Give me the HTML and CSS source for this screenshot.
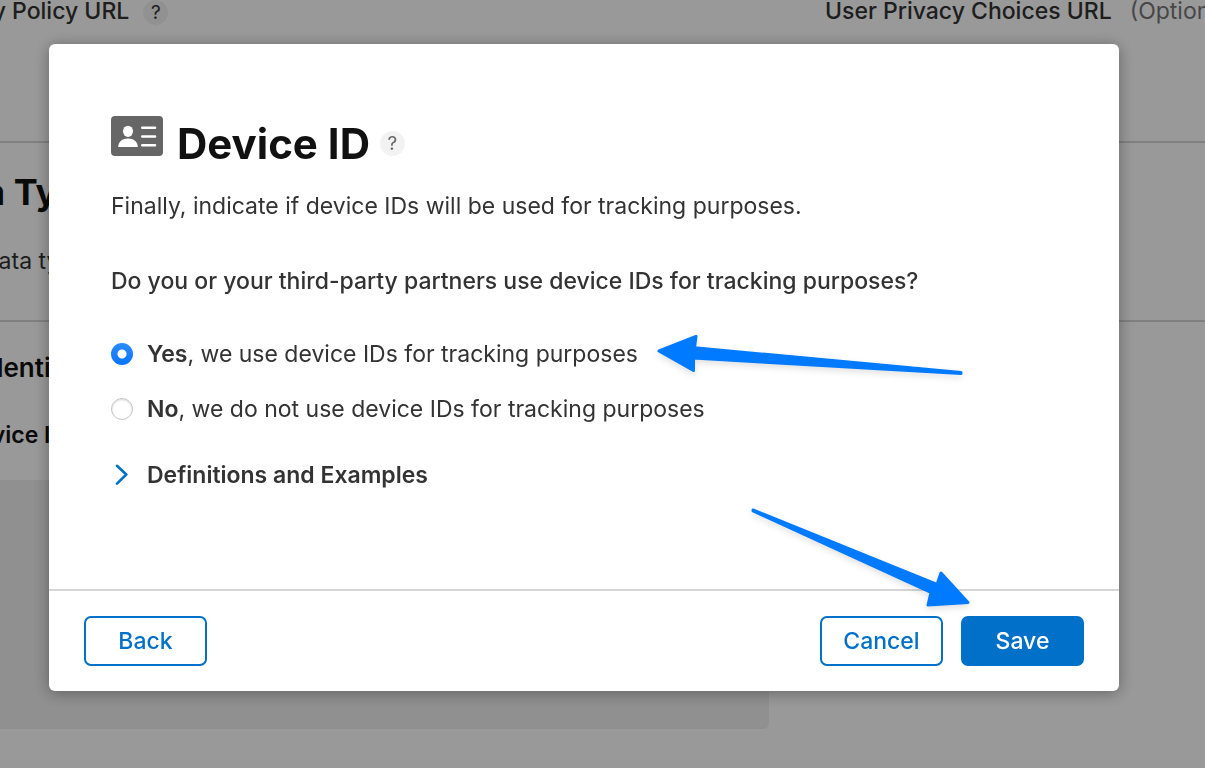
FILE: index.html
```
<!DOCTYPE html>
<html lang="en">
<head>
    <meta charset="UTF-8">
    <meta name="viewport" content="width=device-width, initial-scale=1.0">
    <title>Device ID</title>
    <link rel="stylesheet" href="styles.css">
</head>
<body>
    <main class="page">
        <section class="urls">
            <div class="url">Privacy Policy URL <span class="help page-help">?</span></div>
            <div class="url">User Privacy Choices URL <span class="optional">(Optional)</span></div>
        </section>
        <section class="types">
            <h1>Data Types</h1>
            <p>Data types</p>
        </section>
        <section class="identifiers">
            <h2>Identifiers</h2>
            <h3>Device ID</h3>
            <div class="panel"></div>
        </section>
    </main>

    <div class="overlay">
        <form class="modal" role="dialog" aria-labelledby="title">
            <div class="modal-body">
                <header class="modal-header">
                    <svg class="id-icon" viewBox="0 0 52 40" aria-hidden="true">
                        <rect width="52" height="40" rx="4" fill="#666"/>
                        <ellipse cx="17" cy="15.3" rx="5" ry="5.6" fill="#fff"/>
                        <path d="M7.2 31c0-5.200 4.300-8.500 9.800-8.500s9.800 3.300 9.800 8.500z" fill="#fff"/>
                        <path d="M31.300 11.800h12.700M31.300 20.500h12.700M31.300 29.200h12.700" stroke="#fff" stroke-width="2.600" stroke-linecap="round"/>
                    </svg>
                    <h2 id="title">Device ID</h2>
                    <button type="button" class="help" aria-label="Help">?</button>
                </header>
                <p class="intro">Finally, indicate if device IDs will be used for tracking purposes.</p>
                <fieldset class="options">
                    <legend>Do you or your third-party partners use device IDs for tracking purposes?</legend>
                    <label class="option">
                        <input type="radio" name="tracking" value="yes" checked>
                        <span><b>Yes</b>, we use device IDs for tracking purposes</span>
                    </label>
                    <label class="option">
                        <input type="radio" name="tracking" value="no">
                        <span><b>No</b>, we do not use device IDs for tracking purposes</span>
                    </label>
                </fieldset>
                <button type="button" class="disclosure">
                    <svg viewBox="0 0 22 22" aria-hidden="true">
                        <path d="M6 1.800l9.300 8.700-9.300 9.200" fill="none" stroke="#0070c9" stroke-width="2.600" stroke-linecap="round" stroke-linejoin="round"/>
                    </svg>
                    Definitions and Examples
                </button>
            </div>
            <footer class="modal-footer">
                <button type="button" class="button back">Back</button>
                <button type="button" class="button">Cancel</button>
                <button type="submit" class="button primary">Save</button>
            </footer>

            <!-- Pointers to the selected option and to Save -->
            <svg class="arrow arrow-option" viewBox="0 0 310 44" aria-hidden="true">
                <path d="M4 18L41 3.500 39.500 14.800 306 39.500 306 40.500 38.500 25 38.500 37.500z"/>
            </svg>
            <svg class="arrow arrow-save" viewBox="0 0 224 104" aria-hidden="true">
                <path d="M4 4L4 5 182 86.500 179 99 219 96.500 192 67 188 78.500z"/>
            </svg>
        </form>
    </div>
</body>
</html>
```
FILE: styles.css
```
* {
    box-sizing: border-box;
}

body {
    margin: 0;
    height: 100vh;
    overflow: hidden;
    background: #fff;
    color: #333;
    font-family: Inter, "Liberation Sans", sans-serif;
    font-size: 23px;
    line-height: 30px;
}

h1, h2, h3, p {
    margin: 0;
}

button, input {
    font: inherit;
}

/* Page behind the dialog, scrolled sideways */
.page {
    margin-left: -76px;
}

.urls {
    display: grid;
    grid-template-columns: 901px 1fr;
    height: 147px;
    margin-top: -4px;
    border-bottom: 2px solid #d6d6d6;
    white-space: nowrap;
    font-weight: 500;
}

.optional {
    margin-left: 12px;
    color: #777;
    font-weight: 400;
}

.types {
    height: 179px;
    padding-top: 25px;
    border-bottom: 2px solid #d6d6d6;
}

.types h1 {
    color: #111;
    font-size: 36px;
    line-height: 48px;
}

.types p {
    margin-top: 30px;
    padding-left: 58px;
}

.identifiers {
    padding-top: 30px;
    color: #111;
}

.identifiers h2 {
    padding-left: 56px;
    font-size: 26px;
    line-height: 32px;
    font-weight: 600;
}

.identifiers h3 {
    margin-top: 36px;
    padding-left: 38px;
    font-size: 23px;
    font-weight: 600;
}

.panel {
    width: 66%;
    height: 249px;
    margin-top: 30px;
    border-radius: 6px;
    background: #f0f0f0;
}

.help {
    display: inline-block;
    width: 25px;
    height: 25px;
    padding: 0;
    border: none;
    border-radius: 50%;
    background: #f2f2f2;
    color: #666;
    font-size: 19px;
    line-height: 25px;
    text-align: center;
}

.page-help {
    margin-left: 8px;
    color: #333;
    font-weight: 400;
}

.overlay {
    position: fixed;
    inset: 0;
    padding: 44px 86px 78px 49px;
    background: rgba(0, 0, 0, 0.4);
}

.modal {
    position: relative;
    border-radius: 6px;
    background: #fff;
    box-shadow: 0 2px 16px rgba(0, 0, 0, 0.35);
}

.modal-body {
    padding: 72px 62px 99px;
}

.modal-header {
    display: flex;
    align-items: flex-start;
}

.id-icon {
    width: 52px;
    height: 40px;
}

.modal-header h2 {
    margin: 2px 10px 0 14px;
    color: #111;
    font-size: 42px;
    line-height: 52px;
    font-weight: 700;
}

.modal-header .help {
    margin-top: 15px;
}

.intro {
    margin-top: 21px;
}

.options {
    margin: 45px 0 0;
    padding: 0;
    border: none;
}

.options legend {
    margin-bottom: 43px;
    padding: 0;
    font-weight: 500;
}

.option {
    display: flex;
    align-items: center;
    gap: 14px;
    margin-bottom: 25px;
}

.option b {
    font-weight: 600;
}

.option input {
    appearance: none;
    width: 22px;
    height: 22px;
    margin: 0;
    border: 1px solid #c4c4c4;
    border-radius: 50%;
    background: #fff;
    box-shadow: inset 0 1px 2px rgba(0, 0, 0, 0.15);
}

.option input:checked {
    border: none;
    background: radial-gradient(circle, #fff 4px, transparent 5px), linear-gradient(#2b8cff, #0a74ff);
    box-shadow: none;
}

.disclosure {
    display: flex;
    align-items: center;
    gap: 14px;
    margin-top: 11px;
    padding: 0;
    border: none;
    background: none;
    color: #333;
    font-weight: 600;
}

.disclosure svg {
    width: 22px;
    height: 22px;
}

.modal-footer {
    display: flex;
    gap: 18px;
    padding: 25px 35px;
    border-top: 2px solid #d6d6d6;
}

.button {
    width: 123px;
    height: 50px;
    padding: 0;
    border: 2px solid #0070c9;
    border-radius: 7px;
    background: #fff;
    color: #0070c9;
    font-weight: 500;
}

.back {
    margin-right: auto;
}

.primary {
    background: #0070c9;
    color: #fff;
}

.arrow {
    position: absolute;
    fill: #007aff;
    stroke: #007aff;
    stroke-width: 3;
    stroke-linejoin: round;
    filter: drop-shadow(0 3px 3px rgba(0, 0, 0, 0.12));
    pointer-events: none;
}

.arrow-option {
    top: 289px;
    left: 606px;
    width: 310px;
}

.arrow-save {
    top: 462px;
    left: 700px;
    width: 224px;
}
```
